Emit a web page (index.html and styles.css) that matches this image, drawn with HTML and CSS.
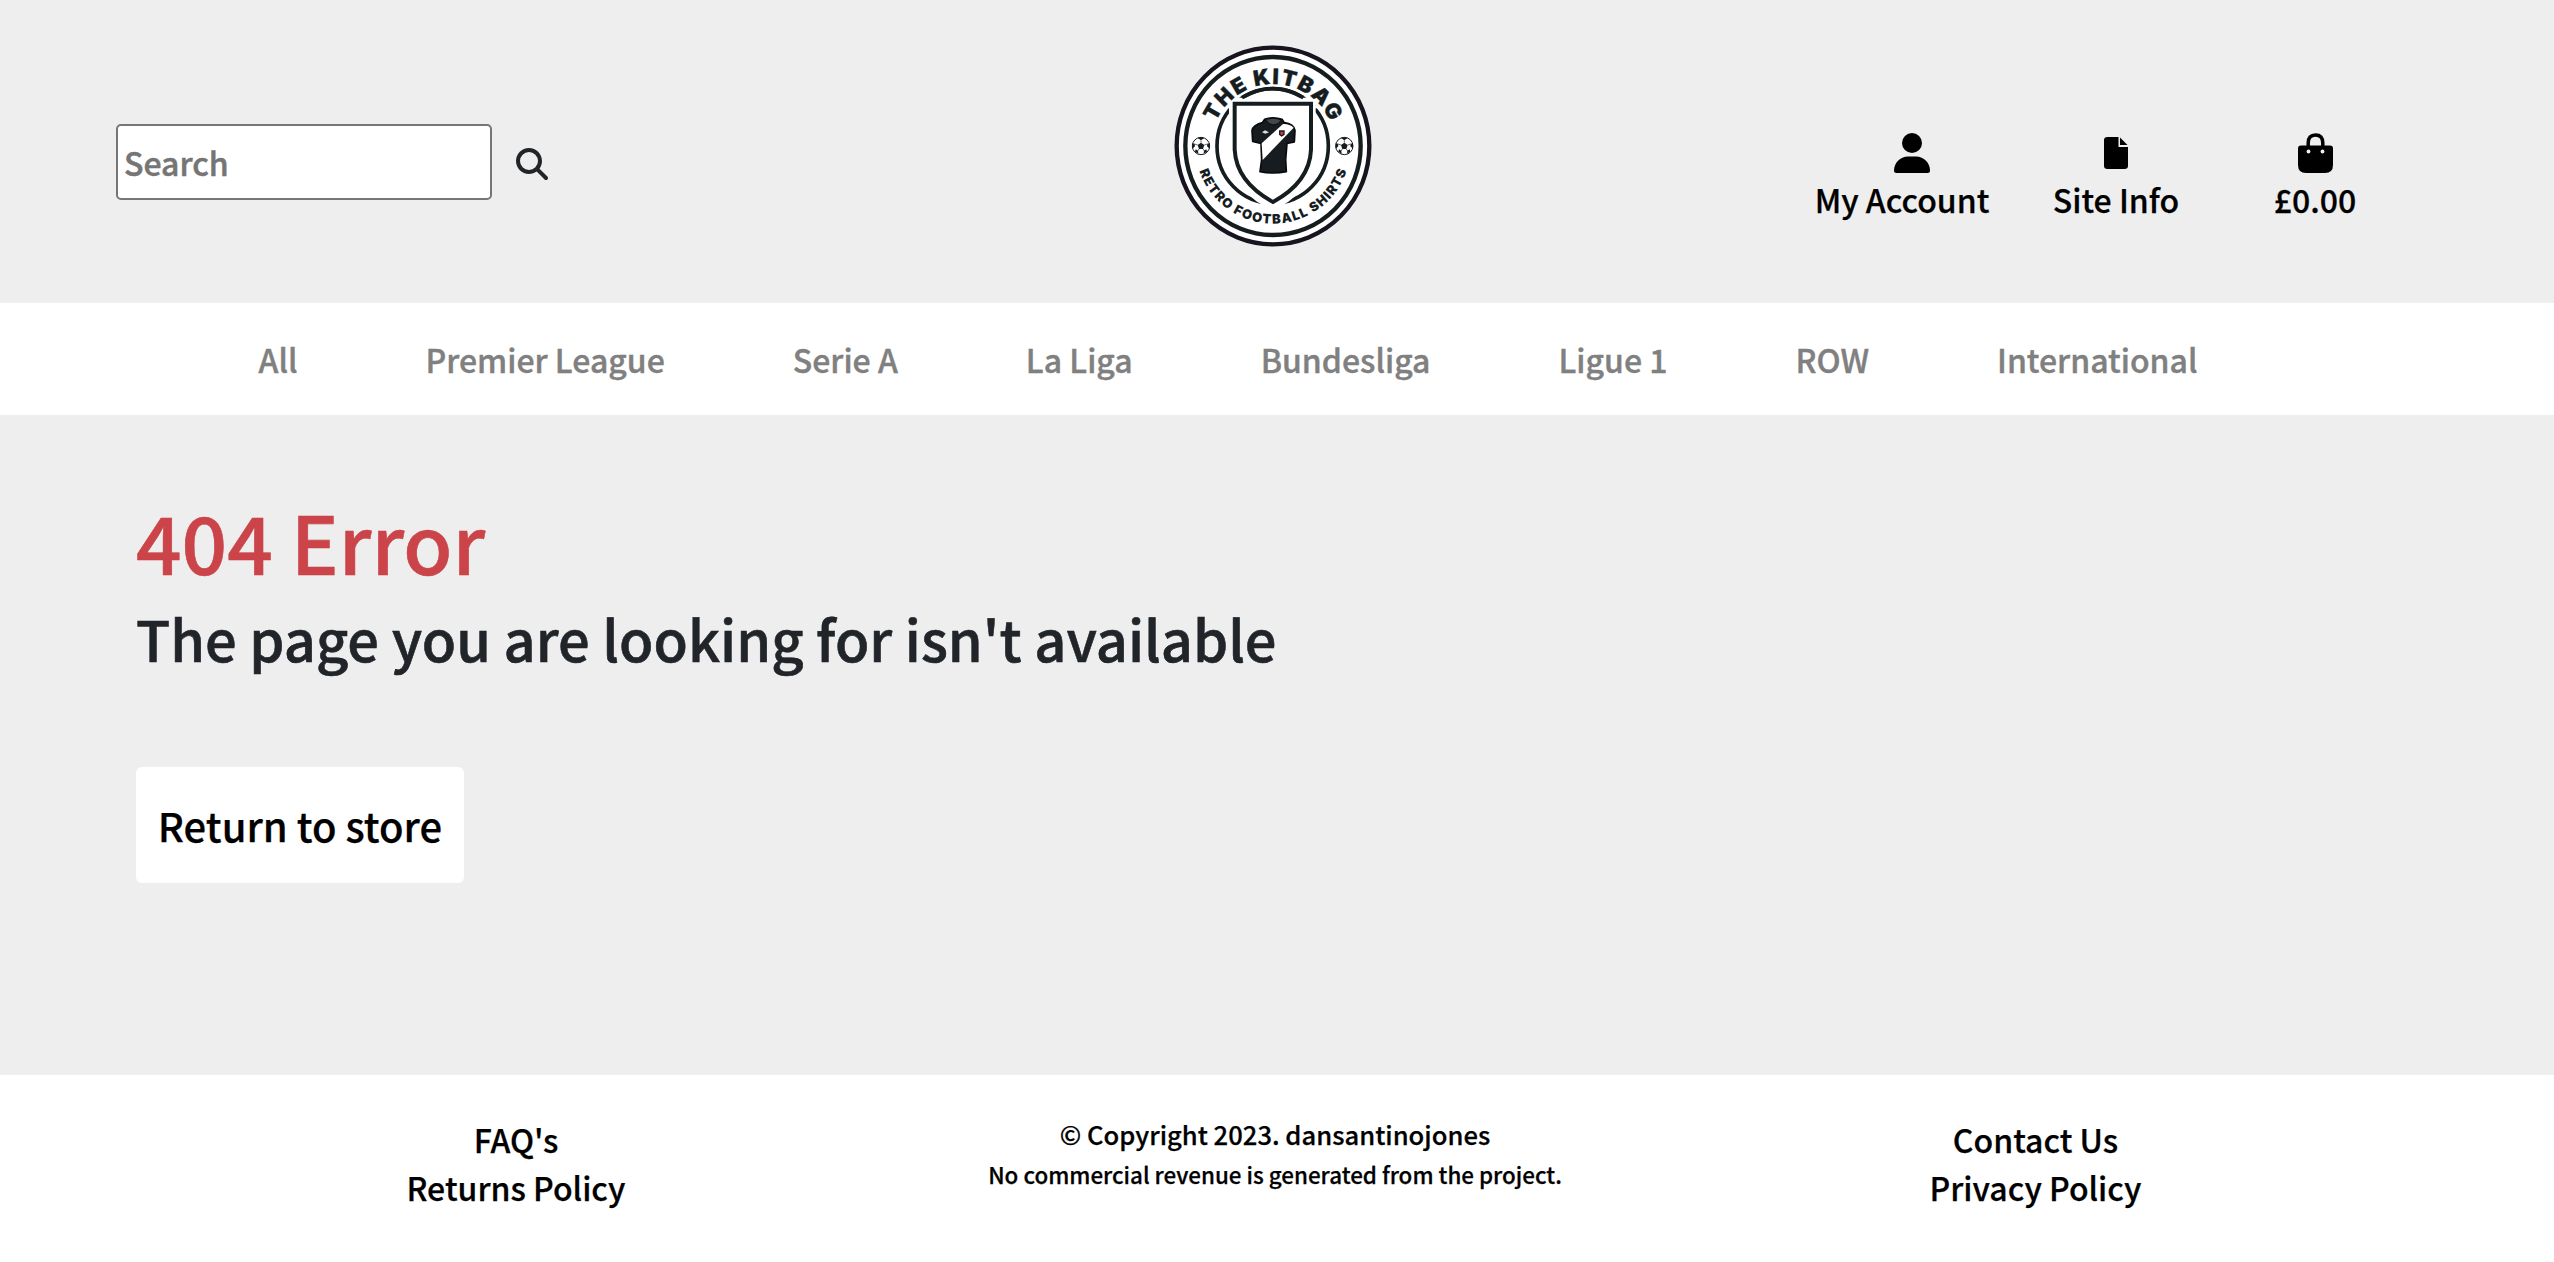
FILE: index.html
```html
<!DOCTYPE html>
<html lang="en">
<head>
<meta charset="utf-8">
<title>The Kitbag - 404</title>
<link rel="stylesheet" href="styles.css">
</head>
<body>
<header class="header">
  <form class="search">
    <input class="search-input" type="text" placeholder="Search" aria-label="Search">
    <button class="search-button" type="button" aria-label="Search">
      <svg viewBox="0 0 512 512" width="32" height="32"><path fill="currentColor" d="M416 208c0 45.900-14.900 88.300-40 122.700L502.600 457.400c12.500 12.500 12.500 32.800 0 45.300s-32.800 12.500-45.300 0L330.700 376c-34.400 25.200-76.800 40-122.700 40C93.100 416 0 322.900 0 208S93.100 0 208 0S416 93.100 416 208zM208 352a144 144 0 1 0 0-288 144 144 0 1 0 0 288z"/></svg>
    </button>
  </form>
  <a class="logo" href="#" aria-label="The Kitbag">
    <svg viewBox="43 46 594 606" width="198" height="202">
      <defs>
        <path id="arc-top" d="M154 349A186 186 0 0 1 526 349"/>
        <path id="arc-bottom" d="M107 349A233 233 0 0 0 573 349"/>
        <g id="ball">
          <circle r="26" fill="#fff" stroke="#161b1f" stroke-width="3"/>
          <path fill="#161b1f" d="M0-10L10-3L6 9H-6L-10-3ZM-10-24Q0-28 10-24L0-17ZM26-8L26 8L18 1L19-7ZM-26-8L-26 8L-18 1L-19-7ZM8 23L18 17L16 10L9 14ZM-8 23L-18 17L-16 10L-9 14Z"/>
          <path stroke="#161b1f" stroke-width="2" d="M0-10V-17M10-3L19-6M6 9L10 15M-6 9L-10 15M-10-3L-19-6"/>
        </g>
      </defs>
      <ellipse cx="340" cy="349" rx="289" ry="295" fill="#fff" stroke="#17141f" stroke-width="13"/>
      <ellipse cx="340" cy="349" rx="263" ry="267" fill="none" stroke="#161d1f" stroke-width="13"/>
      <ellipse cx="339" cy="349" rx="167" ry="172" fill="none" stroke="#161d1f" stroke-width="11"/>
      <path fill="#fff" d="M150 236L190 196L244 204H436L490 196L530 236L468 236V360Q465 456 386 516L340 545L292 516Q214 456 208 360V236Z"/>
      <path fill="none" stroke="#161d1f" stroke-width="11" d="M247 204Q339 150 431 204"/>
      <path fill="#fff" stroke="#161d1f" stroke-width="12" d="M225 222H454V360Q450 457 340 517Q230 457 225 360Z"/>
      <path fill="#171c20" stroke="#090b0d" stroke-width="5" stroke-linejoin="round" d="M315 269Q341 260 367 269L374 279Q402 283 406 302L404 337L382 341L378 390L380 426Q341 434 301 426L306 390L304 341L279 335L277 303Q280 286 308 279Z"/>
      <path fill="#fff" d="M370 283Q389 282 402 294L309 391L306 341Z"/>
      <path fill="#42474b" stroke="#050607" stroke-width="3" d="M317 269Q341 261 366 270Q356 286 341 286Q326 286 317 269Z"/>
      <path fill="#ddd" d="M307 308L316 302L328 308L317 312Z"/>
      <path fill="#c93b2e" stroke="#171c20" stroke-width="4" d="M360 304H373V314L366 319L360 314Z"/>
      <use href="#ball" x="124" y="349"/>
      <use href="#ball" x="554" y="349"/>
      <text class="logo-title"><textPath href="#arc-top" startOffset="50%" textLength="436">THE KITBAG</textPath></text>
      <text class="logo-tagline"><textPath href="#arc-bottom" startOffset="50%" textLength="580">RETRO FOOTBALL SHIRTS</textPath></text>
    </svg>
  </a>
  <div class="links">
    <a class="link link-account" href="#">
      <svg viewBox="0 0 36 40" width="36" height="40"><ellipse cx="18" cy="10" rx="10" ry="10"/><path d="M14 23.500H22C30 23.500 36 30 36 37.500Q36 40 33.500 40H2.500Q0 40 0 37.500C0 30 6 23.500 14 23.500Z"/></svg>
      <span>My Account</span>
    </a>
    <a class="link link-info" href="#">
      <svg viewBox="0 0 24 40" width="24" height="40"><path d="M3.500 4H14.500V14H24V33Q24 36 20.500 36H3.500Q0 36 0 33V7Q0 4 3.500 4ZM16 4.500L23.500 12H16Z"/></svg>
      <span>Site Info</span>
    </a>
    <a class="link link-bag" href="#">
      <svg viewBox="0 0 35 40" width="35" height="40"><path fill="none" stroke="#000" stroke-width="3.500" d="M10.200 15V10Q10.200 1.900 17.500 1.900T24.800 10V15"/><path d="M3 12.500H32Q35 12.500 35 15.500V32Q35 40 27 40H8Q0 40 0 32V15.500Q0 12.500 3 12.500Z"/><circle cx="10.500" cy="18.500" r="1.900" fill="#eee"/><circle cx="24.500" cy="18.500" r="1.900" fill="#eee"/></svg>
      <span>£0.00</span>
    </a>
  </div>
</header>
<nav class="nav">
  <a href="#">All</a><a href="#">Premier League</a><a href="#">Serie A</a><a href="#">La Liga</a><a href="#">Bundesliga</a><a href="#">Ligue 1</a><a href="#">ROW</a><a href="#">International</a>
</nav>
<main class="main">
  <h1 class="title">404 Error</h1>
  <h2 class="subtitle">The page you are looking for isn't available</h2>
  <a class="return" href="#">Return to store</a>
</main>
<footer class="footer">
  <div class="footer-links"><a href="#">FAQ's</a><a href="#">Returns Policy</a></div>
  <div class="footer-copy"><p class="copyright">© Copyright 2023. dansantinojones</p><p class="notice">No commercial revenue is generated from the project.</p></div>
  <div class="footer-links"><a href="#">Contact Us</a><a href="#">Privacy Policy</a></div>
</footer>
</body>
</html>
```
FILE: styles.css
```css
* { box-sizing: border-box; }
body {
  margin: 0;
  min-height: 1262px;
  display: flex;
  flex-direction: column;
  background: #eee;
  color: #000;
  font: 500 32px/48px "Noto Sans CJK JP", sans-serif;
  -webkit-text-stroke: 0.25px currentColor;
}
a { color: inherit; text-decoration: none; }
h1, h2, p { margin: 0; font-weight: 500; }
.header {
  height: 303px;
  padding: 0 168px 0 116px;
  display: grid;
  grid-template-columns: 1058px 198px 1fr;
}
.search { display: flex; align-items: center; height: 76px; margin-top: 124px; }
.search-input {
  width: 376px;
  height: 76px;
  padding: 2px 6px;
  border: 2px solid #767676;
  border-radius: 5px;
  background: #fff;
  font: inherit;
}
.search-input::placeholder { color: #757575; opacity: 1; -webkit-text-stroke: 0.5px #757575; }
.search-button { margin: 4px 0 0 24px; padding: 0; border: 0; background: none; color: #212529; }
.search-button svg { display: block; }
.logo { margin-top: 45px; height: 202px; }
.logo svg { display: block; }
.logo-title, .logo-tagline {
  font-family: Inter, "Liberation Sans", sans-serif;
  font-weight: 900;
  fill: #161d1f;
  -webkit-text-stroke: 0;
  stroke: #161d1f;
  text-anchor: middle;
}
.logo-title { font-size: 64px; stroke-width: 1px; }
.logo-tagline { font-size: 39px; stroke-width: 0; }
.links { display: flex; margin-top: 133px; height: 92px; padding-left: 442px; }
.link { display: flex; flex-direction: column; align-items: center; gap: 2px; white-space: nowrap; }
.link-account { width: 176px; }
.link-account svg { margin-left: 19px; }
.link-info { width: 126px; margin-left: 63px; }
.link-bag { width: 84px; margin-left: 94px; }
.link svg { flex: none; }
.nav {
  height: 112px;
  padding-left: 258.5px;
  display: flex;
  align-items: center;
  gap: 128px;
  background: #fff;
  color: #808080;
  -webkit-text-stroke-width: 0.4px;
}
.main { flex: 1; padding: 77px 136px 0; display: flex; flex-direction: column; align-items: flex-start; }
.title, .subtitle { -webkit-text-stroke: 0.6px currentColor; }
.title { font-size: 80px; line-height: 96px; color: #cb444a; }
.subtitle { margin-top: 16px; font-size: 56px; line-height: 67px; color: #212529; }
.return {
  width: 328px;
  height: 116px;
  margin-top: 96px;
  border-radius: 6px;
  background: #fff;
  font-size: 40px;
  line-height: 116px;
  text-align: center;
}
.footer {
  height: 187px;
  padding: 40px 0 0 44px;
  display: grid;
  grid-template-columns: 944px 574px 947px;
  background: #fff;
  text-align: center;
}
.footer-links { display: flex; flex-direction: column; }
.copyright { font-size: 25.6px; line-height: 38px; }
.notice { font-size: 22.4px; line-height: 42px; white-space: nowrap; }
```
